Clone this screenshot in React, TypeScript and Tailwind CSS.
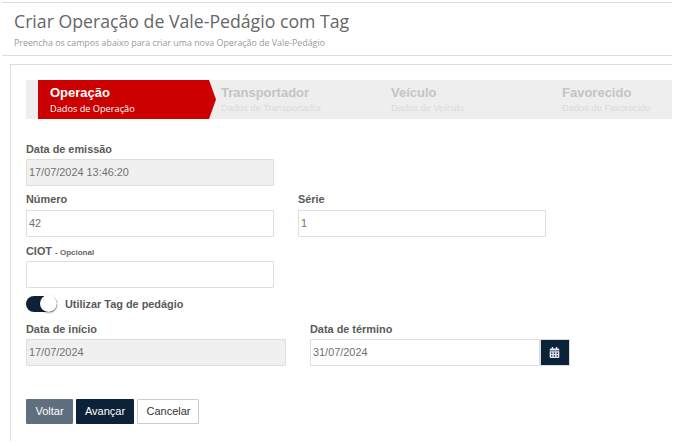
import React from "react";
import { FaCalendarAlt } from "react-icons/fa";

const sans = "font-['Liberation_Sans',Arial,sans-serif]";

function Step({ title, sub, className }: { title: string; sub: string; className: string }) {
  return (
    <div className={className}>
      <div className="text-[13px] leading-[17px] font-bold text-[#c4c4c4]">{title}</div>
      <div className="text-[9.3px] leading-[13px] mt-[1px] text-[#dadada] whitespace-nowrap">{sub}</div>
    </div>
  );
}

function Label({ children, className = "" }: { children: React.ReactNode; className?: string }) {
  return <div className={`text-[10.9px] leading-[13px] font-bold text-[#5a5a5a] ${className}`}>{children}</div>;
}

function Field({ value = "", disabled = false, className = "" }: { value?: string; disabled?: boolean; className?: string }) {
  return (
    <div
      className={`h-[27px] border border-[#dfdfdf] rounded-[1px] pl-[2px] flex items-center text-[10.9px] text-[#707070] ${disabled ? "bg-[#f0f0f0]" : "bg-white"} ${className}`}
    >
      {value}
    </div>
  );
}

export default function App() {
  return (
    <div className={`w-[672px] h-[446px] overflow-hidden bg-white ${sans}`}>
      <div className="mt-[2px] ml-[2px] border-t border-[#dddddd] h-[54px] border-b pl-[12px] pt-[6px]">
        <h1 className="font-['Open_Sans',sans-serif] text-[17.7px] leading-[24px] text-[#666] whitespace-nowrap">
          Criar Operação de Vale-Pedágio com Tag
        </h1>
        <p className="font-['Open_Sans',sans-serif] text-[8.85px] leading-[12px] mt-[4px] text-[#999] whitespace-nowrap">
          Preencha os campos abaixo para criar uma nova Operação de Vale-Pedágio
        </p>
      </div>
      <div className="mt-[8px] ml-[10px] h-[377px] border-t border-l border-[#dddddd] pl-[15px] pt-[15px]">
        <div className="h-[39px] bg-[#eeeeee] flex pl-[12px]">
          <div className="relative w-[171px] h-full bg-[#cc0000] pl-[12px] pt-[4px] text-white shrink-0">
            <div className="text-[13px] leading-[17px] font-bold">Operação</div>
            <div className="text-[9.2px] leading-[13px] mt-[1px] font-['Open_Sans',sans-serif]">Dados de Operação</div>
            <svg className="absolute left-full top-0" width="8" height="39" viewBox="0 0 8 39">
              <polygon points="0,0 7,19.5 0,39" fill="#cc0000" />
            </svg>
          </div>
          <Step title="Transportador" sub="Dados de Transportador" className="w-[170px] pl-[12px] pt-[4px] shrink-0" />
          <Step title="Veículo" sub="Dados de Veículo" className="w-[171px] pt-[4px] shrink-0 ml-[12px] mr-[-12px]" />
          <Step title="Favorecido" sub="Dados de Favorecido" className="pt-[4px] shrink-0 ml-[12px]" />
        </div>

        <Label className="mt-[24px]">Data de emissão</Label>
        <Field value="17/07/2024 13:46:20" disabled className="w-[248px] mt-[3px]" />

        <div className="flex gap-[24px] mt-[7px]">
          <div>
            <Label>Número</Label>
            <Field value="42" className="w-[248px] mt-[4px]" />
          </div>
          <div>
            <Label>Série</Label>
            <Field value="1" className="w-[248px] mt-[4px]" />
          </div>
        </div>

        <Label className="mt-[8px]">
          CIOT <span className="text-[8px] text-[#666]">- Opcional</span>
        </Label>
        <Field className="w-[248px] mt-[2px]" />

        <div className="flex items-center gap-[8px] mt-[7px] h-[18px]">
          <div className="relative w-[31px] h-[16px] rounded-full bg-[#0b2239]">
            <div className="absolute right-0 top-[-1px] w-[17px] h-[17px] rounded-full bg-white shadow-[0_1px_2px_rgba(0,0,0,0.4)]" />
          </div>
          <span className="text-[10.9px] leading-[13px] font-bold text-[#5a5a5a]">Utilizar Tag de pedágio</span>
        </div>

        <div className="flex gap-[24px] mt-[10px]">
          <div>
            <Label>Data de início</Label>
            <Field value="17/07/2024" disabled className="w-[260px] mt-[3px]" />
          </div>
          <div>
            <Label>Data de término</Label>
            <div className="flex mt-[3px]">
              <Field value="31/07/2024" className="w-[230px] text-[#777]" />
              <div className="w-[30px] h-[27px] bg-[#0b2239] border border-[#dcdcdc] flex items-center justify-center">
                <FaCalendarAlt className="text-[#e8e6f5] text-[11px] mr-[1px]" />
              </div>
            </div>
          </div>
        </div>

        <div className="flex mt-[33px] h-[25px] text-[11px]">
          <div className="w-[47px] bg-[#5f6f80] text-white rounded-[1px] flex items-center justify-center">Voltar</div>
          <div className="w-[58px] ml-[3px] bg-[#0b2239] text-white rounded-[1px] flex items-center justify-center">Avançar</div>
          <div className="w-[62px] ml-[3px] pl-[1px] border border-[#cccccc] bg-white text-[#333] rounded-[1px] flex items-center justify-center">Cancelar</div>
        </div>
      </div>
    </div>
  );
}
